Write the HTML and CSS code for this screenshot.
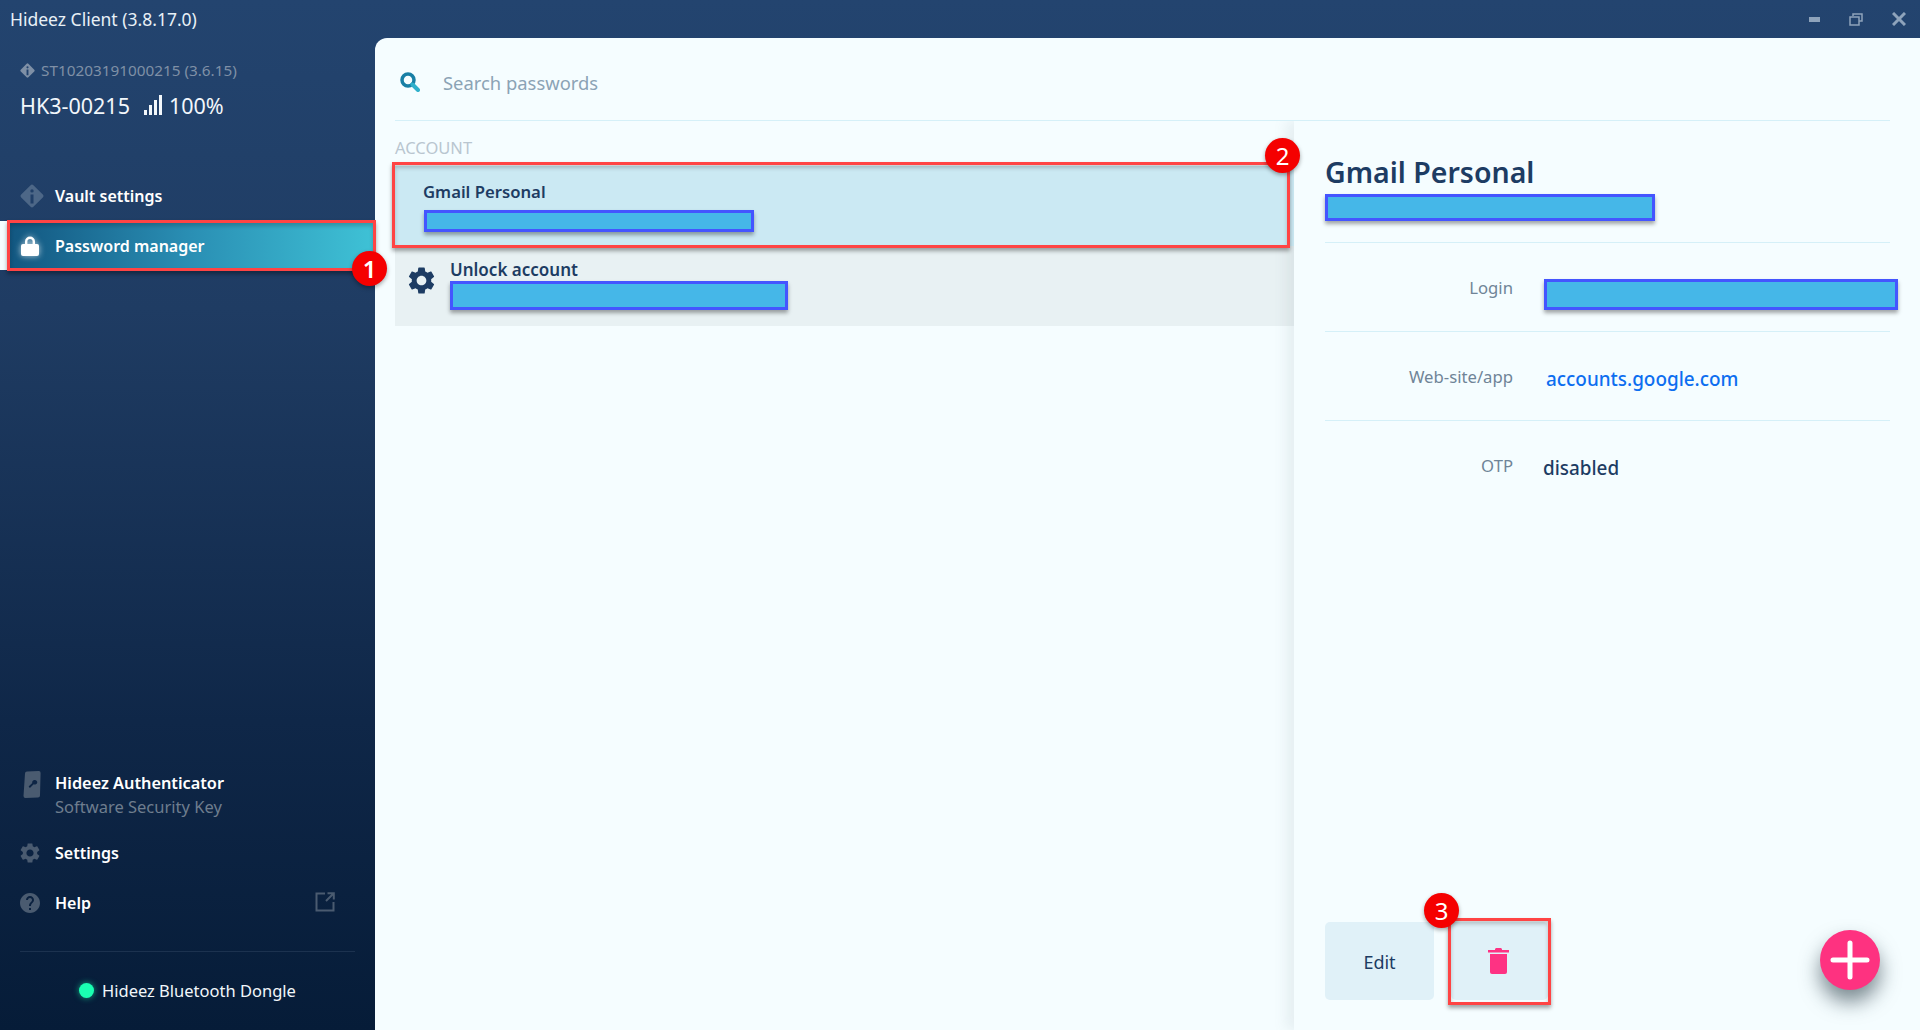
FILE: index.html
```html
<!DOCTYPE html>
<html lang="en">

<head>
    <meta charset="UTF-8">
    <title>Hideez Client</title>
    <link rel="stylesheet" href="styles.css">
</head>

<body>
    <svg class="defs" width="0" height="0">
        <symbol id="gear" viewBox="2 2 20 20">
            <path d="M19.14 12.94c.04-.3.06-.61.06-.94 0-.32-.02-.64-.07-.94l2.03-1.58c.18-.14.23-.41.12-.61l-1.92-3.32c-.12-.22-.37-.29-.59-.22l-2.39.96c-.5-.38-1.03-.7-1.62-.94l-.36-2.54c-.04-.24-.24-.41-.48-.41h-3.84c-.24 0-.43.17-.47.41l-.36 2.54c-.59.24-1.13.57-1.62.94l-2.39-.96c-.22-.08-.47 0-.59.22L2.74 8.87c-.12.21-.08.47.12.61l2.03 1.58c-.05.3-.09.63-.09.94s.02.64.07.94l-2.03 1.58c-.18.14-.23.41-.12.61l1.92 3.32c.12.22.37.29.59.22l2.39-.96c.5.38 1.03.7 1.62.94l.36 2.54c.05.24.24.41.48.41h3.84c.24 0 .44-.17.47-.41l.36-2.54c.59-.24 1.13-.56 1.62-.94l2.39.96c.22.08.47 0 .59-.22l1.92-3.32c.12-.22.07-.47-.12-.61l-2.01-1.58zM12 15.6c-1.98 0-3.6-1.62-3.6-3.6s1.62-3.6 3.6-3.6 3.6 1.62 3.6 3.6-1.62 3.6-3.6 3.6z" />
        </symbol>
        <symbol id="diamond" viewBox="0 0 24 24">
            <path fill-rule="evenodd" d="M10.6 1.2a2 2 0 0 1 2.8 0l9.4 9.4a2 2 0 0 1 0 2.8l-9.4 9.4a2 2 0 0 1-2.8 0l-9.4-9.4a2 2 0 0 1 0-2.8zM12 5.2a1.7 1.7 0 1 0 0 3.4 1.7 1.7 0 0 0 0-3.4zM10.5 10.4v9h3v-9z" />
        </symbol>
    </svg>

    <div class="titlebar">
        <span class="app-title">Hideez Client (3.8.17.0)</span>
        <div class="win-buttons">
            <svg width="11" height="5" viewBox="0 0 11 5"><rect width="11" height="5" /></svg>
            <svg width="14" height="13" viewBox="0 0 14 13" class="win-outline">
                <path d="M4 3V1h9v7h-3M1 4h9v8H1z" />
            </svg>
            <svg width="14" height="14" viewBox="0 0 14 14" class="win-close">
                <path d="M1 1l12 12M13 1L1 13" />
            </svg>
        </div>
    </div>

    <div class="content">
        <!-- Sidebar -->
        <aside class="sidebar">
            <div class="device">
                <div class="device-serial">
                    <svg class="icon-serial"><use href="#diamond" /></svg>
                    ST10203191000215 (3.6.15)
                </div>
                <div class="device-name">
                    <span>HK3-00215</span>
                    <svg class="signal" width="18" height="20" viewBox="0 0 18 20">
                        <rect x="0" y="15" width="3" height="5" />
                        <rect x="5" y="10" width="3" height="10" />
                        <rect x="10" y="5" width="3" height="15" />
                        <rect x="15" y="0" width="3" height="20" />
                    </svg>
                    <span>100%</span>
                </div>
            </div>

            <nav class="nav">
                <div class="nav-item">
                    <svg class="nav-icon icon-vault"><use href="#diamond" /></svg>
                    Vault settings
                </div>
                <div class="nav-item nav-active">
                    <svg class="nav-icon icon-lock" viewBox="0 0 18 20">
                        <path d="M4 8V5.500a5 5 0 0 1 10 0V8h-2.400V5.500a2.600 2.600 0 0 0-5.200 0V8z" />
                        <rect x="0" y="8" width="18" height="12" rx="2" />
                    </svg>
                    Password manager
                    <span class="mark mark-nav"></span>
                    <span class="badge badge-1">1</span>
                </div>
            </nav>

            <div class="sidebar-bottom">
                <div class="auth-item">
                    <svg class="nav-icon icon-auth" viewBox="0 0 18 27">
                        <path fill-rule="evenodd" d="M4 .5 15.500 0a2 2 0 0 1 2.100 2l-.6 22.500a2 2 0 0 1-2 2L2.500 27a2 2 0 0 1-2-2L2 2.500a2 2 0 0 1 2-2zM11.500 9a2.300 2.300 0 0 0-2.200 3L5.600 15.600l1.300 1.300L10.700 13.200a2.300 2.300 0 1 0 .8-4.200z" />
                    </svg>
                    <div>
                        <div class="auth-title">Hideez Authenticator</div>
                        <div class="auth-sub">Software Security Key</div>
                    </div>
                </div>
                <div class="nav-item nav-low">
                    <svg class="nav-icon icon-low"><use href="#gear" /></svg>
                    Settings
                </div>
                <div class="nav-item nav-low">
                    <svg class="nav-icon icon-low" viewBox="2 2 20 20">
                        <path d="M12 2C6.480 2 2 6.480 2 12s4.480 10 10 10 10-4.480 10-10S17.520 2 12 2zm1 17h-2v-2h2v2zm2.070-7.750l-.9.920C13.450 12.900 13 13.500 13 15h-2v-.5c0-1.100.45-2.100 1.170-2.830l1.240-1.260c.37-.36.59-.86.59-1.410 0-1.100-.9-2-2-2s-2 .9-2 2H8c0-2.210 1.790-4 4-4s4 1.790 4 4c0 .88-.36 1.680-.93 2.250z" />
                    </svg>
                    Help
                    <svg class="external" width="20" height="20" viewBox="0 0 20 20">
                        <path d="M10 1.500H1.500v17h17V10M11 9l7.500-7.500M12.500 1.200h6.300v6.300" />
                    </svg>
                </div>
                <div class="dongle">
                    <span class="dongle-dot"></span>
                    Hideez Bluetooth Dongle
                </div>
            </div>
        </aside>

        <!-- Main panel -->
        <main class="main">
            <div class="search">
                <svg class="search-icon" width="20" height="20" viewBox="0 0 20 20">
                    <circle cx="8" cy="8" r="6" class="search-ring" />
                    <path d="M12.500 12.500l5.500 5.500" class="search-handle" />
                </svg>
                <span class="search-text">Search passwords</span>
            </div>

            <div class="columns">
                <section class="list">
                    <div class="list-head">ACCOUNT</div>
                    <div class="row row-selected">
                        <div class="row-title">Gmail Personal</div>
                        <div class="redact redact-row1"></div>
                        <span class="mark mark-row"></span>
                        <span class="badge badge-2">2</span>
                    </div>
                    <div class="row row-unlock">
                        <svg class="row-gear"><use href="#gear" /></svg>
                        <div>
                            <div class="row-title row-title-lg">Unlock account</div>
                            <div class="redact redact-row2"></div>
                        </div>
                    </div>
                </section>

                <section class="detail">
                    <div class="detail-head">
                        <h1>Gmail Personal</h1>
                        <div class="redact redact-head"></div>
                    </div>
                    <div class="field">
                        <div class="field-label">Login</div>
                        <div class="redact redact-login"></div>
                    </div>
                    <div class="field">
                        <div class="field-label">Web-site/app</div>
                        <a class="field-value field-link">accounts.google.com</a>
                    </div>
                    <div class="field field-last">
                        <div class="field-label">OTP</div>
                        <div class="field-value field-plain">disabled</div>
                    </div>

                    <div class="actions">
                        <div class="btn btn-edit">Edit</div>
                        <div class="btn btn-delete">
                            <svg width="21" height="26" viewBox="0 0 21 26">
                                <path d="M7 1.500C7 .7 7.700 0 8.500 0h4c.8 0 1.500.7 1.500 1.500V2h7v2.500H0V2h7z" />
                                <path d="M2 6h17v18a2 2 0 0 1-2 2H4a2 2 0 0 1-2-2z" />
                            </svg>
                            <span class="mark mark-delete"></span>
                            <span class="badge badge-3">3</span>
                        </div>
                    </div>
                    <div class="fab">
                        <svg width="40" height="40" viewBox="0 0 40 40">
                            <path d="M3 20h34M20 3v34" />
                        </svg>
                    </div>
                </section>
            </div>
        </main>
    </div>
</body>

</html>
```

FILE: styles.css
```css
/* General Styles */
body {
    margin: 0;
    width: 1920px;
    height: 1030px;
    overflow: hidden;
    display: flex;
    flex-direction: column;
    font-family: "Noto Sans", sans-serif;
    background: linear-gradient(180deg, #23446f 0%, #1f3c63 30%, #0f2748 70%, #061c38 100%);
}

.defs {
    position: absolute;
}

/* Title bar */
.titlebar {
    height: 38px;
    flex-shrink: 0;
    display: flex;
    align-items: center;
    justify-content: space-between;
    padding: 0 14px 0 10px;
    color: #e8f0f6;
}

.app-title {
    font-size: 17.5px;
}

.win-buttons {
    display: flex;
    align-items: center;
    gap: 29px;
    fill: #8ea3bb;
}

.win-outline {
    fill: none;
    stroke: #8ea3bb;
    stroke-width: 1.5;
}

.win-close {
    fill: none;
    stroke: #8ea3bb;
    stroke-width: 3;
}

.content {
    flex: 1;
    display: flex;
    min-height: 0;
}

/* Sidebar */
.sidebar {
    width: 375px;
    flex-shrink: 0;
    display: flex;
    flex-direction: column;
    color: #fff;
}

.device {
    padding: 22px 0 0 20px;
}

.device-serial {
    display: flex;
    align-items: center;
    gap: 6px;
    height: 20px;
    font-size: 15.3px;
    color: #7f90a6;
}

.icon-serial {
    width: 15px;
    height: 15px;
    fill: #7f90a6;
}

.device-name {
    display: flex;
    align-items: center;
    height: 30px;
    margin-top: 10px;
    font-size: 21.5px;
    color: #f2f7fb;
}

.signal {
    margin: 0 7px 0 14px;
    fill: #f2f7fb;
}

.nav {
    margin-top: 51px;
}

.nav-item {
    position: relative;
    display: flex;
    align-items: center;
    height: 50px;
    padding-left: 55px;
    font-size: 16px;
    font-weight: 600;
}

.nav-icon {
    position: absolute;
    top: 50%;
    transform: translateY(-50%);
}

.icon-vault {
    left: 20px;
    width: 24px;
    height: 24px;
    fill: #4d6787;
}

.nav-active {
    height: 49px;
    background: linear-gradient(90deg, #125680 0%, #2a8fb4 50%, #3fc2d6 100%);
    box-shadow: -7px 0 0 #f5fdff;
    margin-left: 7px;
    padding-left: 48px;
}

.icon-lock {
    left: 14px;
    width: 18px;
    height: 20px;
    fill: #fff;
    filter: drop-shadow(0 0 3px rgba(255, 255, 255, 0.7));
}

.sidebar-bottom {
    margin-top: auto;
}

.auth-item {
    position: relative;
    height: 58px;
    box-sizing: border-box;
    padding: 0 0 8px 55px;
    display: flex;
    align-items: center;
}

.icon-auth {
    left: 23px;
    top: 1px;
    transform: none;
    width: 18px;
    height: 27px;
    fill: #4a5b70;
}

.auth-title {
    font-size: 16.3px;
    font-weight: 600;
    line-height: 23px;
}

.auth-sub {
    font-size: 16.5px;
    line-height: 23px;
    color: #6e7d8e;
}

.icon-low {
    left: 20px;
    width: 20px;
    height: 20px;
    fill: #4a5b70;
}

.external {
    position: absolute;
    left: 315px;
    top: 14px;
    fill: none;
    stroke: #4a5b70;
    stroke-width: 2;
}

.dongle {
    margin: 23px 20px 0;
    height: 79px;
    box-sizing: border-box;
    padding: 0 0 2px 59px;
    border-top: 1px solid #1c324f;
    display: flex;
    align-items: center;
    gap: 8px;
    font-size: 16.5px;
    color: #f2f7fb;
}

.dongle-dot {
    width: 15px;
    height: 15px;
    border-radius: 50%;
    background: #1affb2;
    box-shadow: 0 0 6px rgba(26, 255, 178, 0.6);
}

/* Main panel */
.main {
    flex: 1;
    display: flex;
    flex-direction: column;
    background: #f5fdff;
    border-top-left-radius: 12px;
    min-width: 0;
}

.search {
    height: 83px;
    box-sizing: border-box;
    padding-top: 7px;
    margin: 0 30px 0 20px;
    border-bottom: 1px solid #d5f0f8;
    display: flex;
    align-items: center;
    flex-shrink: 0;
}

.search-icon {
    margin-left: 5px;
    margin-top: -2px;
    fill: none;
}

.search-ring {
    stroke: #187fa5;
    stroke-width: 3.5;
}

.search-handle {
    stroke: #2fb0cb;
    stroke-width: 4;
    stroke-linecap: round;
}

.search-text {
    margin-left: 23px;
    font-size: 18.4px;
    color: #8ba3b5;
}

.columns {
    flex: 1;
    display: flex;
    min-height: 0;
}

/* Account list */
.list {
    width: 919px;
    flex-shrink: 0;
    padding-left: 20px;
    box-sizing: border-box;
}

.list-head {
    height: 45px;
    line-height: 54px;
    font-size: 16.5px;
    color: #b9c6d0;
}

.row {
    position: relative;
    height: 80px;
    box-sizing: border-box;
    color: #1d3c63;
}

.row-title {
    font-size: 16.7px;
    font-weight: 600;
    line-height: 22px;
}

.row-title-lg {
    font-size: 17px;
}

.row-selected {
    z-index: 1;
    background: #cbe9f3;
    padding: 15px 0 0 28px;
}

.row-unlock {
    background: #e8f1f3;
    display: flex;
    padding: 13px 0 0 55px;
}

.row-gear {
    position: absolute;
    left: 13px;
    top: 21px;
    width: 27px;
    height: 27px;
    fill: #1d3c63;
}

/* Redaction blocks */
.redact {
    box-sizing: border-box;
    background: #45b7e8;
    border: 3px solid #4455ff;
    box-shadow: 0 3px 4px rgba(0, 0, 0, 0.35);
    flex-shrink: 0;
}

.redact-row1 {
    width: 330px;
    height: 22px;
    margin: 7px 0 0 1px;
}

.redact-row2 {
    width: 338px;
    height: 29px;
}

.redact-head {
    width: 330px;
    height: 27px;
}

.redact-login {
    width: 354px;
    height: 31px;
    margin: 36px 0 0 31px;
}

/* Detail panel */
.detail {
    position: relative;
    flex: 1;
    display: flex;
    flex-direction: column;
    padding: 0 30px 0 31px;
    background: #f5fdff;
    box-shadow: -8px 0 12px rgba(120, 140, 150, 0.12);
    clip-path: inset(0 0 0 -20px);
    min-width: 0;
}

.detail-head {
    height: 122px;
    border-bottom: 1px solid #d5f0f8;
    box-sizing: border-box;
}

.detail-head h1 {
    margin: 0 0 1px;
    padding-top: 30px;
    font-size: 28.5px;
    line-height: 42px;
    font-weight: 600;
    color: #1d3c63;
}

.field {
    height: 89px;
    box-sizing: border-box;
    border-bottom: 1px solid #d5f0f8;
    display: flex;
}

.field-last {
    border-bottom: none;
}

.field-label {
    width: 188px;
    flex-shrink: 0;
    padding-top: 34px;
    text-align: right;
    font-size: 16.7px;
    line-height: 22px;
    color: #6f8497;
}

.field-value {
    margin-top: 36px;
    font-size: 18.9px;
    line-height: 22px;
    font-weight: 500;
}

.field-link {
    margin-left: 33px;
    color: #0d6ef0;
}

.field-plain {
    margin-left: 30px;
    color: #1d3c63;
}

/* Buttons */
.actions {
    margin-top: auto;
    margin-bottom: 30px;
    display: flex;
    gap: 17px;
}

.btn {
    position: relative;
    width: 109px;
    height: 78px;
    display: flex;
    align-items: center;
    justify-content: center;
    border-radius: 5px;
    background: #e0f1f8;
    font-size: 18px;
    color: #1d3c63;
}

.btn-edit {
    box-sizing: border-box;
    padding-top: 2px;
}

.btn-delete {
    width: 97px;
    fill: #fe3283;
}

.btn-delete svg {
    margin-right: 2px;
}

.fab {
    position: absolute;
    right: 40px;
    bottom: 40px;
    width: 60px;
    height: 60px;
    display: flex;
    align-items: center;
    justify-content: center;
    border-radius: 50%;
    background: #fe3280;
    box-shadow: 0 12px 20px rgba(40, 60, 70, 0.6);
}

.fab svg {
    fill: none;
    stroke: #fff;
    stroke-width: 5;
    stroke-linecap: round;
}

/* Annotations drawn over the screenshot */
.mark {
    position: absolute;
    z-index: 1;
    box-sizing: border-box;
    border: 3px solid #ff4444;
    box-shadow: 0 3px 4px rgba(0, 0, 0, 0.35), inset 0 3px 4px rgba(0, 0, 0, 0.2);
}

.mark-nav {
    inset: -1px -1px -1px 0;
}

.mark-row {
    left: -3px;
    top: -4px;
    width: 898px;
    height: 86px;
}

.mark-delete {
    left: -3px;
    top: -4px;
    width: 103px;
    height: 87px;
}

.badge {
    position: absolute;
    z-index: 2;
    width: 35px;
    height: 35px;
    border-radius: 50%;
    background: #f50000;
    color: #fff;
    font-size: 24px;
    line-height: 35px;
    text-align: center;
    box-shadow: 0 2px 4px rgba(0, 0, 0, 0.35);
}

.badge-1 {
    right: -12px;
    top: 30px;
}

.badge-2 {
    left: 870px;
    top: -28px;
}

.badge-3 {
    left: -27px;
    top: -29px;
}
```
